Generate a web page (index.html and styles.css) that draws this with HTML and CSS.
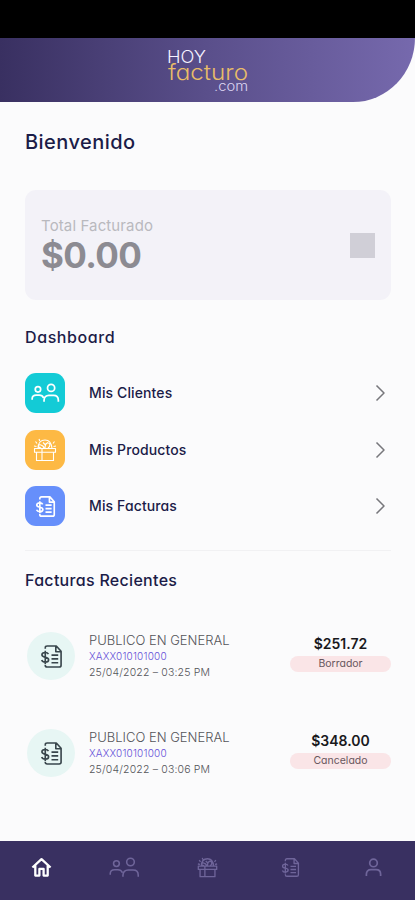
FILE: index.html
```html
<!DOCTYPE html>
<html lang="es">
<head>
<meta charset="utf-8">
<meta name="viewport" content="width=device-width, initial-scale=1">
<title>Hoy Facturo</title>
<link rel="stylesheet" href="styles.css">
</head>
<body>
<svg class="sprite" aria-hidden="true">
  <symbol id="clients" viewBox="0 0 30 20">
    <circle cx="7.2" cy="6.2" r="2.8"/><circle cx="20.8" cy="4.7" r="3.7"/>
    <path d="M1.2 17v-1c0-2.400 1.800-3.800 4.200-3.800h3.200c2.200 0 3.600 1 4.400 2.800M13.500 19v-1.500c0-3.200 2-5 5-5h4.800c3 0 5 1.800 5 5V19"/>
  </symbol>
  <symbol id="gift" viewBox="0 0 24 24">
    <path d="M1.500 10.500h21v3.700h-21zM3.500 14.200v8.300h17v-8.300M9 10.500v12M5 10.500C5 5 8 2 12 2s6.500 3 7 8.500M8 10c-4-1-3-4 0-3 2 .6 3 2 3 3.500M12 10c0-3 1-5 3-5s3 3 0 5M10 4.500l2 2 3-2M2.500 3.500L4 5.500M6 1l.8 2M21.500 3.500L20 5.500M1 8l2.500.5M23 8l-2.500.5"/>
  </symbol>
  <symbol id="invoice" viewBox="0 0 24 26">
    <path d="M5.500 5V4c0-1.300.7-2 2-2h9.500l5 5.500V22c0 1.300-.7 2-2 2H7.500c-1.300 0-2-.7-2-2v-.5M16.500 2v6H22M12 11.500h7M12 15.500h7M12 19.500h7"/>
    <path d="M8.800 10.500C8.200 9.300 7 8.800 5.500 8.800c-2 0-3.500 1-3.500 2.500 0 3.700 7 1.500 7 5 0 1.600-1.500 2.600-3.500 2.600-1.800 0-3.200-.8-3.700-2.200M5.500 7v13.700"/>
  </symbol>
  <symbol id="chevron" viewBox="0 0 11 18"><path d="M1.500 1.500L9 9l-7.500 7.500"/></symbol>
  <symbol id="home" viewBox="0 0 22 22"><path d="M1.500 11L11 2.200l9.500 8.800M4.500 9v10.500h4.300v-7h4.400v7h4.300V9"/></symbol>
  <symbol id="person" viewBox="0 0 20 22"><circle cx="10" cy="6.200" r="4"/><path d="M2.500 20v-2c0-3 1.800-4.800 4.800-4.800h5.400c3 0 4.800 1.800 4.800 4.800v2"/></symbol>
</svg>

<div class="status-bar"></div>
<header class="header">
  <svg class="logo" viewBox="0 0 84 44" role="img" aria-label="Hoy Facturo.com">
    <text class="logo-hoy" x="1" y="13.5" textLength="39" lengthAdjust="spacingAndGlyphs">HOY</text>
    <text class="logo-name" x="2" y="31" textLength="80" lengthAdjust="spacingAndGlyphs">facturo</text>
    <text class="logo-com" x="48" y="41.5" textLength="34" lengthAdjust="spacingAndGlyphs">.com</text>
  </svg>
</header>

<main class="content">
  <h1 class="welcome">Bienvenido</h1>
  <section class="total">
    <div>
      <div class="total-label">Total Facturado</div>
      <div class="total-value">$0.00</div>
    </div>
    <span class="total-square"></span>
  </section>

  <h2 class="heading dashboard">Dashboard</h2>
  <nav class="menu">
    <a class="menu-row"><span class="tile cyan"><svg class="i-clients"><use href="#clients"/></svg></span><span class="menu-label">Mis Clientes</span><svg class="chevron"><use href="#chevron"/></svg></a>
    <a class="menu-row"><span class="tile amber"><svg class="i-gift"><use href="#gift"/></svg></span><span class="menu-label">Mis Productos</span><svg class="chevron"><use href="#chevron"/></svg></a>
    <a class="menu-row"><span class="tile blue"><svg class="i-invoice"><use href="#invoice"/></svg></span><span class="menu-label">Mis Facturas</span><svg class="chevron"><use href="#chevron"/></svg></a>
  </nav>

  <h2 class="heading recent">Facturas Recientes</h2>
  <section class="invoices">
    <article class="invoice">
      <span class="round"><svg><use href="#invoice"/></svg></span>
      <div class="details"><div class="name">PUBLICO EN GENERAL</div><div class="rfc">XAXX010101000</div><div class="date">25/04/2022 – 03:25 PM</div></div>
      <div class="amount"><div class="price">$251.72</div><div class="badge">Borrador</div></div>
    </article>
    <article class="invoice">
      <span class="round"><svg><use href="#invoice"/></svg></span>
      <div class="details"><div class="name">PUBLICO EN GENERAL</div><div class="rfc">XAXX010101000</div><div class="date">25/04/2022 – 03:06 PM</div></div>
      <div class="amount"><div class="price">$348.00</div><div class="badge">Cancelado</div></div>
    </article>
  </section>
</main>

<nav class="tabs">
  <a class="tab active"><svg class="t-home"><use href="#home"/></svg></a>
  <a class="tab"><svg class="t-clients"><use href="#clients"/></svg></a>
  <a class="tab"><svg class="t-gift"><use href="#gift"/></svg></a>
  <a class="tab"><svg class="t-invoice"><use href="#invoice"/></svg></a>
  <a class="tab"><svg class="t-person"><use href="#person"/></svg></a>
</nav>
</body>
</html>
```
FILE: styles.css
```css
* { box-sizing: border-box; }
body {
  margin: 0;
  height: 900px;
  display: flex;
  flex-direction: column;
  overflow: hidden;
  background: #fbfbfc;
  color: #1b1c48;
  font-family: Inter, "Liberation Sans", sans-serif;
  font-feature-settings: "cv11", "ss03";
}
svg { display: block; fill: none; stroke: currentColor; stroke-width: 1.5; stroke-linejoin: round; }
.sprite { display: none; }
.status-bar { flex: none; height: 38px; background: #000; }
.header {
  flex: none;
  height: 64px;
  display: flex;
  justify-content: center;
  padding-top: 11px;
  background: linear-gradient(90deg, #393061 0%, #5a4f8b 50%, #7669ad 100%);
  border-bottom-right-radius: 62px 64px;
}
.logo { width: 84px; height: 44px; overflow: visible; }
.logo text { stroke: none; font-weight: 300; }
.logo-hoy { fill: #f5f2ff; font-size: 17px; }
.logo-name { fill: #e8bd68; font-size: 22px; }
.logo-com { fill: #dcd5f2; font-size: 13px; }

.content { flex: 1; min-height: 0; padding: 0 24px 0 25px; }
h1, h2 { margin: 0; }
.welcome { height: 88px; padding-top: 26px; font-size: 20px; line-height: 28px; font-weight: 500; letter-spacing: .45px; }
.total {
  height: 110px;
  display: flex;
  align-items: center;
  justify-content: space-between;
  padding: 0 16px;
  background: #f3f2f8;
  border-radius: 11px;
}
.total-label { color: #b9b9be; font-size: 15px; line-height: 20px; letter-spacing: .12px; font-feature-settings: normal; }
.total-value { color: #8c8b92; font-size: 35px; line-height: 39px; font-weight: 700; letter-spacing: -.6px; }
.total-square { width: 25px; height: 25px; background: #d0cfd7; }
.heading { font-size: 16px; line-height: 24px; font-weight: 500; letter-spacing: .3px; }
.dashboard { margin-top: 25px; letter-spacing: .6px; }
.menu { height: 178px; margin-top: 24px; border-bottom: 1px solid #f1f1f3; display: flex; flex-direction: column; gap: 16.5px; }
.menu-row { flex: none; display: flex; align-items: center; height: 40px; }
.tile { width: 40px; height: 40px; border-radius: 11px; display: grid; place-items: center; color: #fff; margin-right: 24px; }
.cyan { background: #13cbd6; }
.amber { background: #fdb944; }
.blue { background: #668ffb; }
.i-clients { width: 29px; height: 20px; stroke-width: 1.8; }
.i-gift { width: 24px; height: 24px; stroke-width: 1.1; }
.i-invoice { width: 21px; height: 23px; stroke-width: 1.9; }
.menu-label { flex: 1; padding-bottom: 1px; font-size: 14px; font-weight: 500; letter-spacing: .12px; }
.chevron { width: 11px; height: 18px; margin-right: 5px; color: #77777b; }
.recent { margin-top: 17px; }
.invoices { margin-top: 40px; }
.invoice { height: 48px; display: flex; align-items: center; margin-bottom: 49px; }
.round { width: 48px; height: 48px; margin: 0 14px 0 2px; border-radius: 50%; background: #e7f6f4; color: #39464c; display: grid; place-items: center; }
.round svg { width: 23px; height: 25px; stroke-width: 1.7; }
.details { flex: 1; color: #545459; white-space: nowrap; }
.name { font-size: 13px; line-height: 17px; font-weight: 300; }
.rfc { color: #6550d8; font-size: 10px; line-height: 15px; font-weight: 300; letter-spacing: .2px; }
.date { font-size: 10.5px; line-height: 17px; font-weight: 300; letter-spacing: .17px; }
.amount { width: 101px; padding-bottom: 6px; text-align: center; }
.price { color: #19191d; font-size: 14px; line-height: 20px; font-weight: 600; }
.badge { height: 16px; border-radius: 8px; background: #fae5e7; color: #68575e; font-size: 10.5px; line-height: 16px; margin-top: 2px; }

.tabs { flex: none; height: 59px; display: flex; align-items: center; background: #393061; padding-bottom: 6px; }
.tab { flex: 1; display: grid; place-items: center; color: #6f659a; }
.active { color: #fff; }
.t-home { width: 21px; height: 21px; stroke-width: 2.4; }
.t-clients { width: 31px; height: 21px; }
.t-gift { width: 21px; height: 21px; }
.t-invoice { width: 19px; height: 21px; stroke-width: 1.7; }
.t-person { width: 19px; height: 21px; stroke-width: 1.8; }
```
